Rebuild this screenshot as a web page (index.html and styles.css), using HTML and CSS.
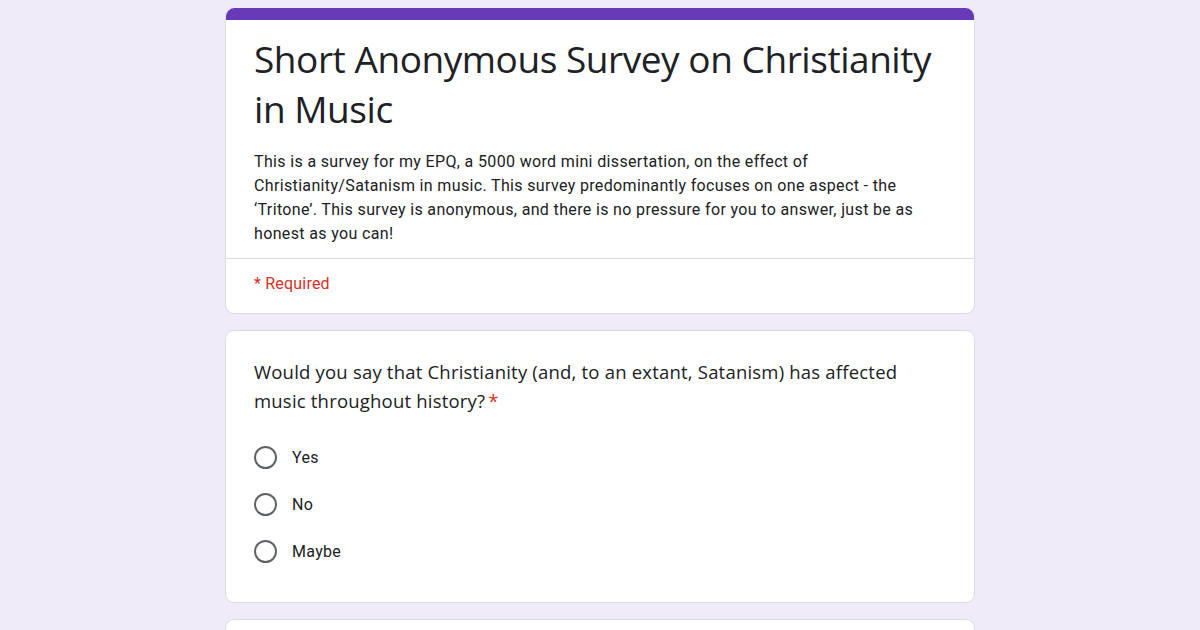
FILE: index.html
```html
<!DOCTYPE html>
<html>
<head>
<meta charset="utf-8">
<link rel="stylesheet" href="styles.css">
</head>
<body>
<div class="form">
  <div class="card header-card">
    <div class="accent"></div>
    <div class="header-body">
      <h1 class="title">Short Anonymous Survey on Christianity in Music</h1>
      <p class="desc">This is a survey for my EPQ, a 5000 word mini dissertation, on the effect of Christianity/Satanism in music. This survey predominantly focuses on one aspect - the ‘Tritone’. This survey is anonymous, and there is no pressure for you to answer, just be as honest as you can!</p>
    </div>
    <div class="required-row">* Required</div>
  </div>
  <div class="card question-card">
    <div class="question">Would you say that Christianity (and, to an extant, Satanism) has affected music throughout history?<span class="star">*</span></div>
    <div class="options">
      <label class="option"><span class="radio"></span><span class="opt-label">Yes</span></label>
      <label class="option"><span class="radio"></span><span class="opt-label">No</span></label>
      <label class="option"><span class="radio"></span><span class="opt-label">Maybe</span></label>
    </div>
  </div>
  <div class="card next-card"></div>
</div>
</body>
</html>
```

FILE: styles.css
```css
html, body {
  margin: 0;
  padding: 0;
  background: #f0ebf8;
  height: 630px;
  overflow: hidden;
}
.form {
  width: 750px;
  margin: 8px auto 0;
  display: flex;
  flex-direction: column;
  gap: 16px;
}
.card {
  background: #fff;
  border: 1px solid #dadce0;
  border-radius: 9px;
  overflow: hidden;
}
.header-card {
  border-top: none;
}
.accent {
  height: 12px;
  background: #673ab7;
}
.header-body {
  padding: 14px 28px 12px;
  border-bottom: 1px solid #dadce0;
}
.title {
  margin: 0;
  font-family: "Open Sans", "Roboto", sans-serif;
  font-weight: 400;
  font-size: 37px;
  line-height: 50px;
  color: #202124;
  letter-spacing: -0.45px;
}
.desc {
  margin: 16px 0 0;
  font-family: "Roboto", "Liberation Sans", sans-serif;
  font-size: 16px;
  line-height: 24px;
  color: #202124;
  letter-spacing: 0.35px;
  max-width: 672px;
}
.required-row {
  padding: 13px 28px 17px;
  font-family: "Roboto", "Liberation Sans", sans-serif;
  font-size: 16px;
  line-height: 24px;
  color: #d93025;
  letter-spacing: 0.2px;
}
.question-card {
  padding: 26px 28px 27px;
}
.question {
  font-family: "Open Sans", "Roboto", sans-serif;
  font-size: 18.5px;
  line-height: 29px;
  color: #202124;
  letter-spacing: 0.2px;
}
.star {
  color: #d93025;
  margin-left: 3px;
}
.options {
  margin-top: 19px;
  display: flex;
  flex-direction: column;
}
.option {
  height: 47px;
  display: flex;
  align-items: center;
  gap: 15px;
}
.radio {
  width: 19px;
  height: 19px;
  border: 2px solid #5f6368;
  border-radius: 50%;
  flex: none;
}
.opt-label {
  font-family: "Roboto", "Liberation Sans", sans-serif;
  font-size: 16px;
  color: #202124;
  letter-spacing: 0.3px;
}
.next-card {
  height: 60px;
}
```
